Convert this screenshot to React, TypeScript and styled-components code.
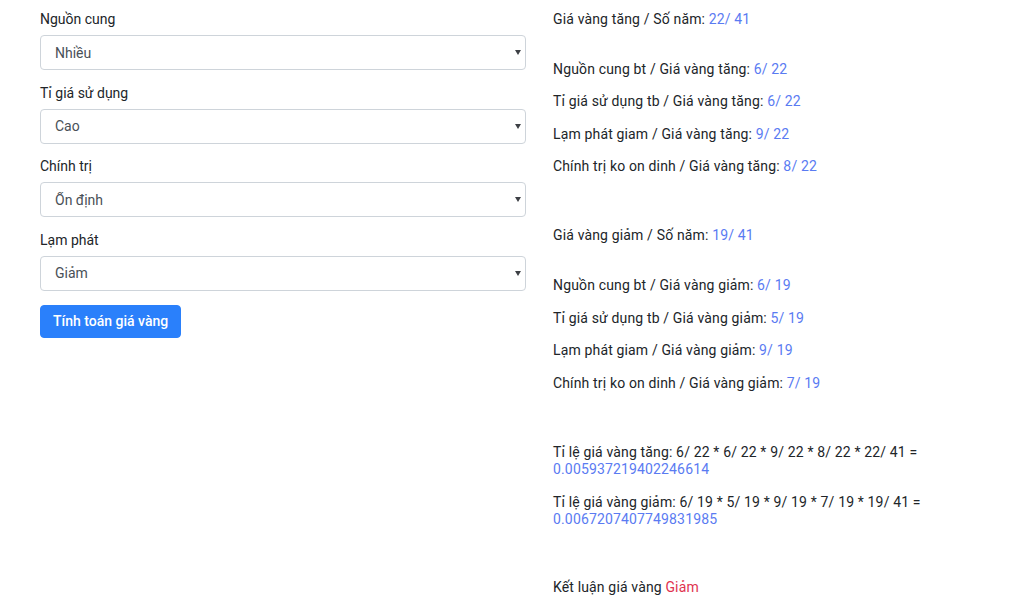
import React from "react";
import styled, { createGlobalStyle } from "styled-components";

const Global = createGlobalStyle`
  html, body { margin: 0; padding: 0; background: #fff; }
  body {
    font-family: Roboto, "Liberation Sans", Arial, sans-serif;
    font-size: 14px;
    color: #212529;
  }
  * { box-sizing: border-box; }
`;

const Page = styled.div`
  display: grid;
  grid-template-columns: 486px 1fr;
  column-gap: 27px;
  padding: 9px 20px 0 40px;
`;

const FormCol = styled.div`
  display: flex;
  flex-direction: column;
  align-items: flex-start;
`;

const Group = styled.div`
  width: 100%;
  margin-bottom: 12.5px;
`;

const Label = styled.label`
  display: block;
  line-height: 21px;
  margin-bottom: 5px;
`;

const SelectWrap = styled.div`
  position: relative;
  &::after {
    content: "";
    position: absolute;
    right: 5px;
    top: 15px;
    border-left: 3.5px solid transparent;
    border-right: 3.5px solid transparent;
    border-top: 5px solid #3d4045;
    pointer-events: none;
  }
`;

const Select = styled.select`
  appearance: none;
  -webkit-appearance: none;
  display: block;
  width: 100%;
  height: 35px;
  padding: 0 24px 0 14px;
  font-family: inherit;
  font-size: 14px;
  color: #495057;
  background: #fff;
  border: 1px solid #ced4da;
  border-radius: 4px;
  outline: none;
`;

const Button = styled.button`
  margin-top: 1.5px;
  font-family: inherit;
  font-size: 14px;
  font-weight: 500;
  line-height: 21px;
  padding: 5px 12px;
  color: #fff;
  background: #2a80fb;
  border: 1px solid #2a80fb;
  border-radius: 4px;
  cursor: pointer;
`;

const ResultCol = styled.div`
  padding-top: 1.5px;
  display: flex;
  flex-direction: column;
  letter-spacing: 0.15px;
`;

const Block = styled.div<{ $gap: number; $after: number }>`
  display: flex;
  flex-direction: column;
  gap: ${(p) => p.$gap}px;
  margin-bottom: ${(p) => p.$after}px;
`;

const Section = styled.div`
  display: flex;
  flex-direction: column;
  gap: 15.5px;
`;

const Line = styled.p`
  margin: 0;
  line-height: 17px;
`;

const Value = styled.span<{ $tone?: "blue" | "red" }>`
  color: ${(p) => (p.$tone === "red" ? "#e0334f" : "#5a7bf2")};
`;

const fields: { label: string; value: string; options: string[] }[] = [
  { label: "Nguồn cung", value: "Nhiều", options: ["Nhiều", "Bình thường", "Ít"] },
  { label: "Tỉ giá sử dụng", value: "Cao", options: ["Cao", "Trung bình", "Thấp"] },
  { label: "Chính trị", value: "Ổn định", options: ["Ổn định", "Không ổn định"] },
  { label: "Lạm phát", value: "Giảm", options: ["Tăng", "Giảm"] },
];

const Stat = ({ text, value }: { text: string; value: string }) => (
  <Line>
    {text} <Value>{value}</Value>
  </Line>
);

export default function App() {
  return (
    <>
      <Global />
      <Page>
        <FormCol>
          {fields.map((f) => (
            <Group key={f.label}>
              <Label>{f.label}</Label>
              <SelectWrap>
                <Select defaultValue={f.value}>
                  {f.options.map((o) => (
                    <option key={o}>{o}</option>
                  ))}
                </Select>
              </SelectWrap>
            </Group>
          ))}
          <Button>Tính toán giá vàng</Button>
        </FormCol>
        <ResultCol>
          <Block $gap={33} $after={52}>
            <Section>
              <Stat text="Giá vàng tăng / Số năm:" value="22/ 41" />
            </Section>
            <Section>
              <Stat text="Nguồn cung bt / Giá vàng tăng:" value="6/ 22" />
              <Stat text="Tỉ giá sử dụng tb / Giá vàng tăng:" value="6/ 22" />
              <Stat text="Lạm phát giam / Giá vàng tăng:" value="9/ 22" />
              <Stat text="Chính trị ko on dinh / Giá vàng tăng:" value="8/ 22" />
            </Section>
          </Block>
          <Block $gap={33} $after={52}>
            <Section>
              <Stat text="Giá vàng giảm / Số năm:" value="19/ 41" />
            </Section>
            <Section>
              <Stat text="Nguồn cung bt / Giá vàng giảm:" value="6/ 19" />
              <Stat text="Tỉ giá sử dụng tb / Giá vàng giảm:" value="5/ 19" />
              <Stat text="Lạm phát giam / Giá vàng giảm:" value="9/ 19" />
              <Stat text="Chính trị ko on dinh / Giá vàng giảm:" value="7/ 19" />
            </Section>
          </Block>
          <Block $gap={16} $after={51}>
            <Stat
              text="Tỉ lệ giá vàng tăng: 6/ 22 * 6/ 22 * 9/ 22 * 8/ 22 * 22/ 41 ="
              value="0.005937219402246614"
            />
            <Stat
              text="Tỉ lệ giá vàng giảm: 6/ 19 * 5/ 19 * 9/ 19 * 7/ 19 * 19/ 41 ="
              value="0.0067207407749831985"
            />
          </Block>
          <Line>
            Kết luận giá vàng <Value $tone="red">Giảm</Value>
          </Line>
        </ResultCol>
      </Page>
    </>
  );
}
